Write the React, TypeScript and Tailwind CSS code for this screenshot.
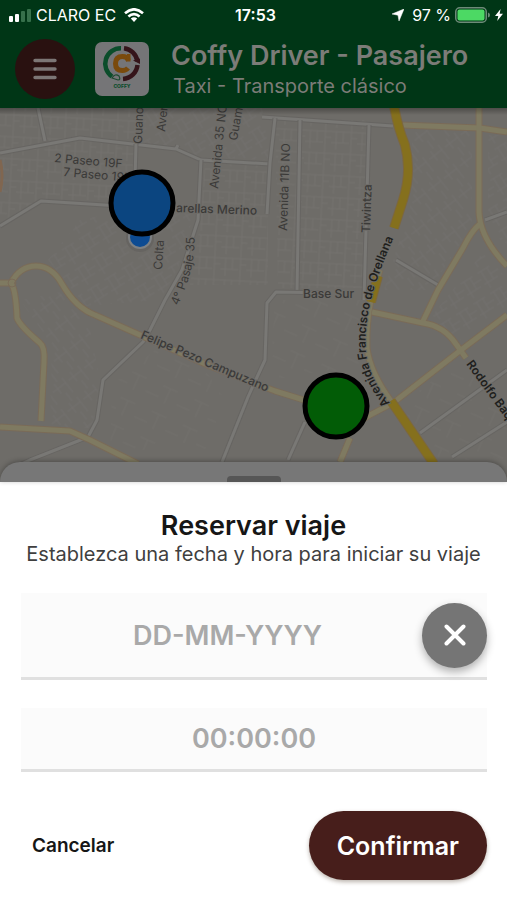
const whiteRoads = [
  'M0 153 L80 138 L176 149 L178 145 M176 149 L201 160 L270 164',
  'M38 108 L45 141',
  'M0 226 L41 201 L120 206',
  'M136 144 L135 180',
  'M201 160 L198 220 L182 270 L165 300 L150 330 L143 342 L103 380 L97 420 L88 437 L30 460 L8 470',
  'M262 117 L393 126',
  'M275 118 L270 163 L267 214',
  'M300 120 L297 292',
  'M369 125 L364 300',
  'M330 293 L276 292 L267 303 L265 360 L258 375 L248 397 L222 462',
  'M485 220 L507 212',
  'M396 260 L438 285',
  'M420 433 L507 370',
  'M452 457 L507 422',
  'M305 422 L288 460',
]

const paleRoads = [
  'M0 283 H11 Q20 266 36 266 Q52 266 62 284 Q76 308 95 315 L140 335 L210 366 L275 391 L336 410',
  'M11 283 Q16 290 17 318 Q20 326 40 343 Q45 347 44 362 L41 421',
  'M0 427 L70 431 L90 440 L138 464',
  'M401 125 L480 128 L507 132',
  'M479 108 V212 Q480 238 507 266',
  'M480 224 Q472 230 463 248 L438 290 L422 323',
  'M372 312 L423 323 Q444 326 456 344 L466 358',
  'M340 432 L370 415 L393 403 L461 350 L507 315',
  'M350 438 L340 462',
  'M380 270 L371 300 Q366 325 367 348 Q370 372 391 401',
]

const goldRoads = ['M394 106 Q398 128 405 145 Q412 172 403 200 L394 228', 'M378 276 L371 302', 'M391 401 L434 464']

const blocks = [
  { d: 'M0 108 H136 V200 H42 L0 222 Z', fill: 'url(#streetsA)' },
  { d: 'M140 108 H262 L270 160 L200 157 L140 144 Z', fill: 'url(#streetsB)' },
  { d: 'M205 164 H268 V285 H190 L200 225 Z', fill: 'url(#streetsA)' },
  { d: 'M275 120 H366 V288 H278 Z', fill: 'url(#streetsA)' },
  { d: 'M48 260 L80 220 L138 208 H196 L178 268 L160 300 L86 306 Z', fill: 'url(#streetsB)' },
  { d: 'M20 300 L60 292 L90 330 L100 380 L92 428 H50 L52 345 Z', fill: 'url(#streetsC)' },
  { d: 'M412 130 H472 V225 L430 290 L384 290 L412 200 Z', fill: 'url(#streetsC)' },
  { d: 'M488 135 H507 V250 L488 222 Z M485 250 L507 280 V305 L460 340 L430 318 Z', fill: 'url(#streetsB)' },
  { d: 'M155 350 L200 362 L225 400 L205 450 H110 L112 385 Z', fill: 'url(#streetsD)' },
  { d: 'M400 405 L460 360 L507 420 V460 H440 Z M275 300 H360 L358 380 L330 370 L270 380 Z', fill: 'url(#streetsD)' },
]

function CityMap() {
  return (
    <svg
      viewBox="0 108 507 374"
      preserveAspectRatio="xMidYMid slice"
      className="block h-[374px] w-full"
      role="img"
      aria-label="Mapa"
      fontFamily="Inter, sans-serif"
    >
      <defs>
        <pattern id="streetsA" width="26" height="22" patternUnits="userSpaceOnUse" patternTransform="rotate(3)">
          <path d="M0 4 H26 M5 4 V22 M12 4 V15 M0 15 H18 M20 0 V22 M20 10 H26" fill="none" stroke="#73716e" strokeWidth="1" />
        </pattern>
        <pattern id="streetsB" width="20" height="24" patternUnits="userSpaceOnUse" patternTransform="rotate(-32)">
          <path d="M0 5 H14 M4 5 V24 M11 12 H20 M11 5 V18 M0 18 H16" fill="none" stroke="#72706d" strokeWidth="1" />
        </pattern>
        <pattern id="streetsC" width="24" height="20" patternUnits="userSpaceOnUse" patternTransform="rotate(52)">
          <path d="M0 4 H18 M6 4 V20 M14 10 H24 M0 14 H12" fill="none" stroke="#72706d" strokeWidth="1" />
        </pattern>
        <pattern id="streetsD" width="34" height="28" patternUnits="userSpaceOnUse" patternTransform="rotate(24)">
          <path d="M0 6 H16 M8 6 V22 M20 18 H34" fill="none" stroke="#716f6c" strokeWidth="1" />
        </pattern>
        <linearGradient id="headerShade" x1="0" y1="0" x2="0" y2="1">
          <stop offset="0" stopColor="#000" stopOpacity="0.3" />
          <stop offset="1" stopColor="#000" stopOpacity="0" />
        </linearGradient>
        <path id="orellana" d="M390 403 Q369 378 366 352 Q364 325 373 292 Q384 258 399 226" />
        <path id="pasaje" d="M178 306 Q188 283 191 270 Q195 254 195 230" />
      </defs>

      <rect y="108" width="507" height="374" fill="#6e6c68" />
      {blocks.map((b) => (
        <path key={b.d} d={b.d} fill={b.fill} />
      ))}
      <g fill="none" strokeLinejoin="round">
        {whiteRoads.map((d) => (
          <g key={d}>
            <path d={d} stroke="#676562" strokeWidth="5" />
            <path d={d} stroke="#797875" strokeWidth="3" />
          </g>
        ))}
        <path d="M0 160 Q4 175 0 192" stroke="#806650" strokeWidth="3" />
        {paleRoads.map((d) => (
          <path key={d} d={d} stroke="#7a6b58" strokeWidth="7" />
        ))}
        {paleRoads.map((d) => (
          <path key={d} d={d} stroke="#7f7a61" strokeWidth="5" />
        ))}
        <circle cx="12" cy="283" r="4" stroke="#7a6b58" strokeWidth="1" />
        {goldRoads.map((d) => (
          <g key={d}>
            <path d={d} stroke="#7c6740" strokeWidth="10" />
            <path d={d} stroke="#85701d" strokeWidth="8" />
          </g>
        ))}
      </g>

      <g fill="#3b3a38" stroke="#6e6c68" strokeWidth="2" paintOrder="stroke" fontSize="12">
        <text transform="translate(142 144) rotate(-88)">Guano</text>
        <text transform="translate(165 132) rotate(-84)">Aven</text>
        <text transform="translate(218 189) rotate(-84)">Avenida 35 NO</text>
        <text transform="translate(237 141) rotate(-80)">Guam</text>
        <text transform="translate(54 162) rotate(5)">2 Paseo 19F</text>
        <text transform="translate(63 176) rotate(5)">7 Paseo 19F</text>
        <text transform="translate(176 212) rotate(2)" fontWeight="500">
          arellas Merino
        </text>
        <text transform="translate(162 270) rotate(-86)">Colta</text>
        <text>
          <textPath href="#pasaje">4° Pasaje 35</textPath>
        </text>
        <text transform="translate(287 231) rotate(-88)">Avenida 11B NO</text>
        <text transform="translate(370 233) rotate(-88)" fontWeight="500">
          Tiwintza
        </text>
        <text x="303" y="298" fontWeight="500">
          Base Sur
        </text>
        <text transform="translate(140 338) rotate(23)" fontWeight="500">
          Felipe Pezo Campuzano
        </text>
        <text fill="#201f1d" fontWeight="600">
          <textPath href="#orellana">Avenida Francisco de Orellana</textPath>
        </text>
        <text transform="translate(466 364) rotate(54)" fill="#201f1d" fontWeight="600">
          Rodolfo Baq
        </text>
      </g>

      <circle cx="140" cy="238" r="14" fill="#666461" />
      <circle cx="140" cy="237" r="12" fill="#7d8083" />
      <circle cx="140" cy="237" r="10" fill="#0d4b92" />
      <circle cx="142" cy="203" r="31" fill="#0b4580" stroke="#000" strokeWidth="5" />
      <circle cx="336" cy="406" r="31" fill="#025c06" stroke="#000" strokeWidth="5" />
      <rect y="108" width="507" height="7" fill="url(#headerShade)" />
    </svg>
  )
}

function StatusBar() {
  return (
    <div className="grid h-[30px] grid-cols-[1fr_auto_1fr] items-center pr-1 pl-2 text-base text-white">
      <div className="flex items-center gap-1">
        <svg viewBox="0 0 24 14" className="h-3.5 w-6" aria-hidden="true">
          <rect x="1" y="8" width="4" height="6" rx="1" fill="#fff" />
          <rect x="7" y="6" width="4" height="8" rx="1" fill="#fff" />
          <rect x="13" y="3" width="4" height="11" rx="1" fill="#36704b" />
          <rect x="19" y="1" width="4" height="13" rx="1" fill="#36704b" />
        </svg>
        <span>CLARO EC</span>
        <svg viewBox="0 0 20 14" className="ml-1 h-3.5 w-5" aria-hidden="true">
          <g fill="none" stroke="#fff" strokeWidth="2.6">
            <path d="M1 5.2 Q10 -2.6 19 5.2" />
            <path d="M4.4 8.6 Q10 3.8 15.6 8.6" />
          </g>
          <path d="M6.8 10.6 Q10 8 13.2 10.6 L10 14 Z" fill="#fff" />
        </svg>
      </div>
      <span className="font-semibold">17:53</span>
      <div className="flex items-center justify-end gap-1">
        <svg viewBox="0 0 12 12" className="mr-1 h-3 w-3" aria-hidden="true">
          <path d="M12 0 L7 12 L6 6.2 L0 5 Z" fill="#fff" stroke="#fff" strokeWidth=".5" strokeLinejoin="round" />
        </svg>
        <span>97 %</span>
        <svg viewBox="0 0 36 16" className="h-4 w-9" aria-hidden="true">
          <rect x=".75" y=".75" width="30.5" height="14.5" rx="4" fill="none" stroke="#6d8b78" strokeWidth="1.5" />
          <rect x="2.5" y="2.5" width="27" height="11" rx="2" fill="#4cd964" />
          <path d="M33 5.5 Q35 6 35 8 Q35 10 33 10.5 Z" fill="#6d8b78" />
        </svg>
        <svg viewBox="0 0 8 12" className="h-3 w-2" aria-hidden="true">
          <path d="M5.6 0 L0 7 H3.3 L2.2 12 L8 4.8 H4.6 Z" fill="#fff" />
        </svg>
      </div>
    </div>
  )
}

function CoffyLogo() {
  return (
    <svg viewBox="0 0 54 54" className="h-[54px] w-[54px] shrink-0" role="img" aria-label="Coffy">
      <rect width="54" height="54" rx="7" fill="#757577" />
      <g fill="none" strokeWidth="4.5">
        <path d="M26 6.2 A15.5 15.5 0 0 0 17 34.5" stroke="#0b4d2b" />
        <path d="M29 6.2 A15.5 15.5 0 0 1 42.4 19" stroke="#35141a" />
        <path d="M42.5 23 A15.5 15.5 0 0 1 28 37" stroke="#35141a" />
      </g>
      <path d="M38 18.5 L45 16.5 V22 Z" fill="#35141a" />
      <path d="M17 36 Q20 31 24 34 Q26 38 23 38 Z" fill="none" stroke="#1d4a30" strokeWidth="1.2" />
      <path d="M33 26 Q31 28.5 27.5 28.5 Q20.5 28.5 20.5 21.5 Q20.5 14.5 27.5 14.5 Q32 14.5 33.5 18.5" fill="none" stroke="#7a4a0c" strokeWidth="5" />
      <path d="M32 12 H35.5 V19.5 H31 Z" fill="#7a4a0c" />
      <text x="27" y="45.5" textAnchor="middle" fontFamily="Inter, sans-serif" fontWeight="800" fontSize="5" fill="#0b4d2b">
        COFFY
      </text>
    </svg>
  )
}

export default function App() {
  return (
    <div className="flex min-h-screen flex-col bg-white font-['Inter',sans-serif]">
      <header className="bg-[#003616]">
        <StatusBar />
        <div className="flex h-[78px] items-start pl-[15px]">
          <button
            type="button"
            aria-label="Menú"
            className="mt-[9px] flex size-[60px] shrink-0 items-center justify-center rounded-full bg-[#291110]"
          >
            <svg viewBox="0 0 24 22" className="h-[22px] w-6" aria-hidden="true">
              <path d="M2 2.5 H22 M2 11 H22 M2 19.5 H22" stroke="#7c7675" strokeWidth="3.4" strokeLinecap="round" />
            </svg>
          </button>
          <div className="mt-3 ml-5">
            <CoffyLogo />
          </div>
          <div className="mt-2.5 ml-[22px] min-w-0 whitespace-nowrap text-[#7c7c78]">
            <h1 className="text-[27px] leading-8 font-semibold">Coffy Driver - Pasajero</h1>
            <p className="pl-0.5 text-xl leading-7">Taxi - Transporte clásico</p>
          </div>
        </div>
      </header>

      <main className="relative">
        <CityMap />
        <div className="absolute inset-x-0 bottom-0 flex h-5 items-end justify-center rounded-t-[20px] bg-[#777777] shadow-[0_-1px_5px_rgba(0,0,0,0.3)]">
          <div className="h-1.5 w-[54px] rounded-t-sm bg-[#565656]" />
        </div>
      </main>

      <section role="dialog" aria-labelledby="booking-title" className="grow bg-white pt-7">
        <div className="text-center whitespace-nowrap">
          <h2 id="booking-title" className="text-[27px] leading-8 font-semibold text-[#161616]">
            Reservar viaje
          </h2>
          <p className="text-xl leading-6 text-[#3f3f3f]">Establezca una fecha y hora para iniciar su viaje</p>
        </div>

        <form className="pt-[27px] pr-5 pl-[21px]">
          <div className="flex h-[87px] items-center border-b-[3px] border-[#e0e0e0] bg-[#fbfbfb]">
            <label htmlFor="trip-date" className="sr-only">
              Fecha
            </label>
            <input
              id="trip-date"
              type="text"
              placeholder="DD-MM-YYYY"
              className="h-full min-w-0 flex-1 bg-transparent pl-3 text-center text-[27px] font-semibold text-[#161616] outline-none placeholder:text-[#a9a9a9]"
            />
            <button
              type="button"
              aria-label="Borrar fecha"
              className="flex size-[65px] shrink-0 items-center justify-center rounded-full bg-[#757575] shadow-[0_4px_8px_rgba(0,0,0,0.3)]"
            >
              <svg viewBox="0 0 22 22" className="size-[22px]" aria-hidden="true">
                <path d="M2.5 2.5 L19.5 19.5 M19.5 2.5 L2.5 19.5" stroke="#fff" strokeWidth="4" strokeLinecap="round" />
              </svg>
            </button>
          </div>

          <div className="mt-7 h-16 border-b-[3px] border-[#e0e0e0] bg-[#fbfbfb]">
            <label htmlFor="trip-time" className="sr-only">
              Hora
            </label>
            <input
              id="trip-time"
              type="text"
              placeholder="00:00:00"
              className="h-full w-full bg-transparent text-center text-[27px] font-semibold text-[#161616] outline-none placeholder:text-[#a9a9a9]"
            />
          </div>

          <div className="mt-[39px] flex items-center justify-between pl-[11px]">
            <button type="button" className="text-[19px] leading-7 font-semibold text-[#161616]">
              Cancelar
            </button>
            <button
              type="submit"
              className="h-[69px] rounded-full bg-[#471e1b] px-7 text-[25px] leading-8 font-semibold text-white shadow-[0_2px_4px_rgba(60,40,20,0.35)]"
            >
              Confirmar
            </button>
          </div>
        </form>
      </section>
    </div>
  )
}
